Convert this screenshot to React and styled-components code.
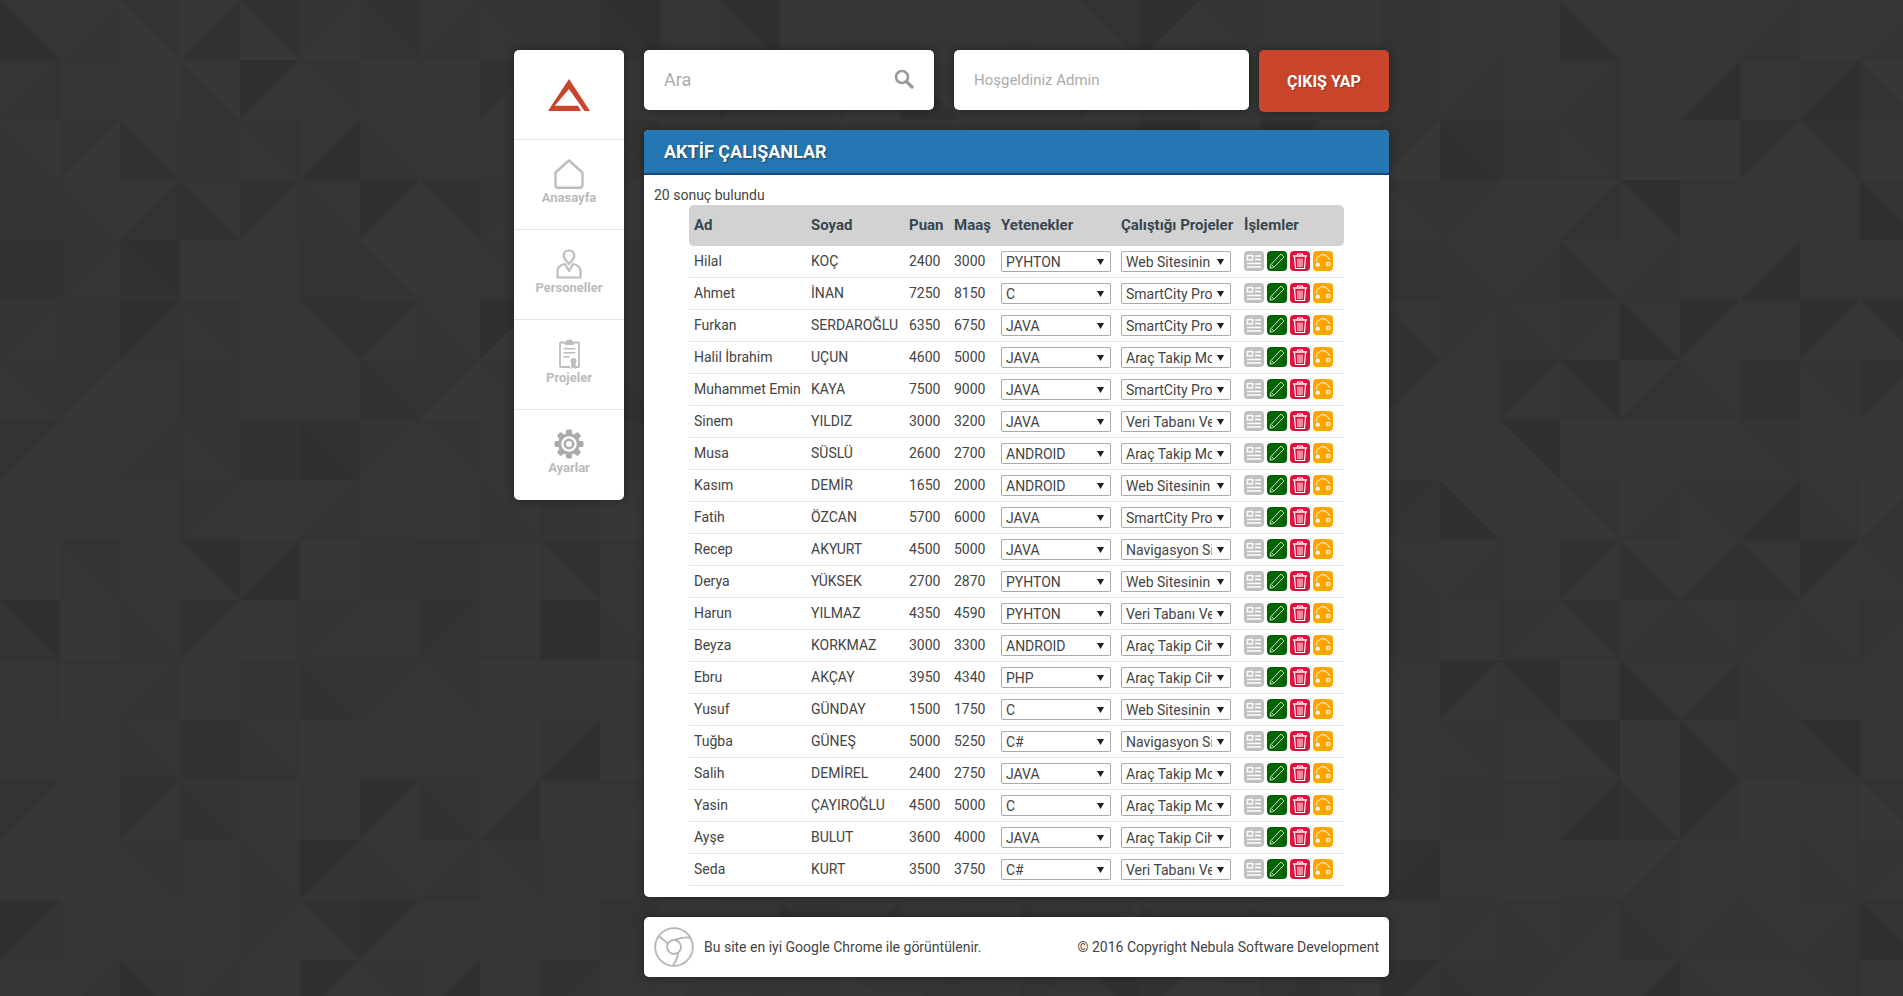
import React from 'react'
import styled, { createGlobalStyle } from 'styled-components'

// triangle tile background, seeded so it stays the same every load
function makeBackground() {
  let seed = 7
  const rnd = () => {
    seed = (seed * 16807) % 2147483647
    return seed / 2147483647
  }
  const shades = ['#353535', '#353535', '#343434', '#363636', '#353535', '#333333', '#373737', '#363636', '#343434', '#323232', '#353535', '#303030']
  const pick = () => shades[Math.floor(rnd() * shades.length)]
  let polys = ''
  for (let y = 0; y < 17; y++) {
    for (let x = 0; x < 32; x++) {
      const l = x * 60, t = y * 60, r = l + 60, b = t + 60
      if ((x + y) % 2 === 0) {
        polys += `<polygon points="${l},${t} ${r},${t} ${r},${b}" fill="${pick()}"/><polygon points="${l},${t} ${l},${b} ${r},${b}" fill="${pick()}"/>`
      } else {
        polys += `<polygon points="${r},${t} ${l},${t} ${l},${b}" fill="${pick()}"/><polygon points="${r},${t} ${r},${b} ${l},${b}" fill="${pick()}"/>`
      }
    }
  }
  const svg = `<svg xmlns="http://www.w3.org/2000/svg" width="1920" height="1020">${polys}</svg>`
  return `data:image/svg+xml,${encodeURIComponent(svg)}`
}

const arrow = `data:image/svg+xml,${encodeURIComponent('<svg xmlns="http://www.w3.org/2000/svg" width="7" height="6"><polygon points="0,0 7,0 3.5,6" fill="#222"/></svg>')}`

const GlobalStyle = createGlobalStyle`
  html, body {
    margin: 0;
    padding: 0;
  }
  body {
    background: #353535 url("${makeBackground()}") 0 0;
    font-family: Roboto, "Liberation Sans", sans-serif;
    font-size: 14px;
    color: #444;
  }
`

const skills = ['PYHTON', 'C', 'JAVA', 'ANDROID', 'PHP', 'C#']
const WEB = 'Web Sitesinin Yapımı'
const SMART = 'SmartCity Projesi'
const MODUL = 'Araç Takip Modülü'
const CIHAZ = 'Araç Takip Cihazı'
const VERI = 'Veri Tabanı Ve Sunucu'
const NAV = 'Navigasyon Sistemi'
const projects = [WEB, SMART, MODUL, CIHAZ, VERI, NAV]

const people = [
  ['Hilal', 'KOÇ', 2400, 3000, 'PYHTON', WEB],
  ['Ahmet', 'İNAN', 7250, 8150, 'C', SMART],
  ['Furkan', 'SERDAROĞLU', 6350, 6750, 'JAVA', SMART],
  ['Halil İbrahim', 'UÇUN', 4600, 5000, 'JAVA', MODUL],
  ['Muhammet Emin', 'KAYA', 7500, 9000, 'JAVA', SMART],
  ['Sinem', 'YILDIZ', 3000, 3200, 'JAVA', VERI],
  ['Musa', 'SÜSLÜ', 2600, 2700, 'ANDROID', MODUL],
  ['Kasım', 'DEMİR', 1650, 2000, 'ANDROID', WEB],
  ['Fatih', 'ÖZCAN', 5700, 6000, 'JAVA', SMART],
  ['Recep', 'AKYURT', 4500, 5000, 'JAVA', NAV],
  ['Derya', 'YÜKSEK', 2700, 2870, 'PYHTON', WEB],
  ['Harun', 'YILMAZ', 4350, 4590, 'PYHTON', VERI],
  ['Beyza', 'KORKMAZ', 3000, 3300, 'ANDROID', CIHAZ],
  ['Ebru', 'AKÇAY', 3950, 4340, 'PHP', CIHAZ],
  ['Yusuf', 'GÜNDAY', 1500, 1750, 'C', WEB],
  ['Tuğba', 'GÜNEŞ', 5000, 5250, 'C#', NAV],
  ['Salih', 'DEMİREL', 2400, 2750, 'JAVA', MODUL],
  ['Yasin', 'ÇAYIROĞLU', 4500, 5000, 'C', MODUL],
  ['Ayşe', 'BULUT', 3600, 4000, 'JAVA', CIHAZ],
  ['Seda', 'KURT', 3500, 3750, 'C#', VERI],
]

function Logo() {
  return (
    <svg width="42" height="32" viewBox="0 0 42 32">
      <polygon fill="#c9442b" points="21,0 42,32 36.500,32 21,10 6.700,26.700 30,26.700 33,32 0,32" />
    </svg>
  )
}

function HomeIcon() {
  return (
    <svg width="30" height="30" viewBox="0 0 30 30" fill="none" stroke="#bdbdbd" strokeWidth="2.4" strokeLinejoin="round">
      <path d="M15 1.500 L28.500 13.500 V26 Q28.500 28.800 25.500 28.800 H4.500 Q1.500 28.800 1.500 26 V13.500 Z" />
    </svg>
  )
}

function PersonIcon() {
  return (
    <svg width="26" height="30" viewBox="0 0 26 30" fill="none" stroke="#bdbdbd" strokeWidth="2.2" strokeLinejoin="round">
      <path d="M13 1.500 C17 1.500 18.600 4.500 18.200 7.500 C17.800 10 15 12.500 13 15 C11 12.500 8.200 10 7.800 7.500 C7.400 4.500 9 1.500 13 1.500 Z" />
      <path d="M9 15 C4 16 1.500 18.500 1.500 22 V28.500 H24.500 V22 C24.500 18.500 22 16 17 15 L13 22 Z" />
    </svg>
  )
}

function ClipboardIcon() {
  return (
    <svg width="21" height="30" viewBox="0 0 21 30">
      <path fill="none" stroke="#bdbdbd" strokeWidth="1.800" d="M6 3.500 H2 Q1 3.500 1 4.500 V27 Q1 28 2 28 H11 M15 28 H19 Q20 28 20 27 V4.500 Q20 3.500 19 3.500 H15" />
      <path fill="#bdbdbd" d="M6 3 Q7 3 7.500 1.500 Q8 0.500 10.500 0.500 Q13 0.500 13.500 1.500 Q14 3 15 3 V6 H6 Z" />
      <path fill="#bdbdbd" d="M4.500 9 H16.500 V10.500 H4.500 Z M4.500 13 H16.500 V14.500 H4.500 Z M4.500 17 H10.500 V18.500 H4.500 Z" />
      <circle cx="14.500" cy="22" r="3" fill="#bdbdbd" />
      <path fill="#bdbdbd" d="M12.500 24 H16.500 L17 30 L14.500 28.500 L12 30 Z" />
    </svg>
  )
}

function GearIcon() {
  const teeth = [0, 45, 90, 135, 180, 225, 270, 315]
  return (
    <svg width="30" height="30" viewBox="0 0 30 30">
      {teeth.map(a => (
        <rect key={a} x="12" y="0.500" width="6" height="6" rx="1.500" fill="#aaa" transform={`rotate(${a} 15 15)`} />
      ))}
      <circle cx="15" cy="15" r="9.300" fill="none" stroke="#aaa" strokeWidth="3" />
      <circle cx="15" cy="15" r="4.200" fill="none" stroke="#aaa" strokeWidth="2.400" />
    </svg>
  )
}

function SearchIcon() {
  return (
    <svg width="20" height="20" viewBox="0 0 20 20" fill="none" stroke="#999" strokeWidth="2.600" strokeLinecap="round">
      <circle cx="8" cy="8" r="6" />
      <path d="M12.500 12.500 L18 18" strokeWidth="3.200" />
    </svg>
  )
}

function ChromeIcon() {
  return (
    <svg width="40" height="40" viewBox="0 0 40 40" fill="none" stroke="#b5b5b5" strokeWidth="1.800">
      <circle cx="20" cy="20" r="18.800" />
      <circle cx="20" cy="20" r="7" />
      <path d="M20 13 C27 11 32 9 37 11" />
      <path d="M14 17 C10 13 6 10 4 9" />
      <path d="M24 26 C24 31 21 35 19 38.500" />
    </svg>
  )
}

function DetailGlyph() {
  return (
    <svg width="20" height="20" viewBox="0 0 20 20" fill="none" stroke="#fff" strokeWidth="1.500">
      <rect x="3.500" y="4.500" width="5" height="4.500" />
      <path d="M11 5 H17 M11 8.500 H17 M3 12.500 H17 M3 16 H17" />
    </svg>
  )
}

function PencilGlyph() {
  return (
    <svg width="20" height="20" viewBox="0 0 20 20" fill="none" stroke="#cfe6cf" strokeWidth="1">
      <path d="M4 13.500 L14 3 L17 6 L6.500 16.500 L3 17 Z" />
      <path d="M4.500 13.500 L6.500 15.500" />
    </svg>
  )
}

function TrashGlyph() {
  return (
    <svg width="20" height="20" viewBox="0 0 20 20" fill="none" stroke="#fff" strokeWidth="1.200">
      <path d="M3 5 H17" strokeWidth="1.500" />
      <path d="M7.500 4.500 V3 H12.500 V4.500" />
      <path d="M4.500 6 L5.500 17.500 H14.500 L15.500 6" />
      <path d="M8 7.500 V16 M10 7.500 V16 M12 7.500 V16" strokeWidth="1" />
    </svg>
  )
}

function LinkGlyph() {
  return (
    <svg width="20" height="20" viewBox="0 0 20 20" fill="none" stroke="#fff" strokeWidth="1">
      <path d="M3 10.300 C4 6 7 3.700 10 3.700 C13 3.700 15.500 5.800 16.300 8.700" />
      <circle cx="4.700" cy="13.700" r="2.100" fill="#fff" stroke="none" />
      <circle cx="15.300" cy="13" r="1.700" strokeWidth="1.200" />
    </svg>
  )
}

const Page = styled.div`
  display: flex;
  gap: 20px;
  width: 875px;
  margin: 0 auto;
  padding: 50px 0 20px;
  align-items: flex-start;
`

const Sidebar = styled.nav`
  flex: 0 0 110px;
  background: #fff;
  border-radius: 5px;
  box-shadow: 0 0 8px rgba(0, 0, 0, 0.35);
`

const NavItem = styled.a`
  display: flex;
  flex-direction: column;
  align-items: center;
  justify-content: ${p => (p.$logo ? 'center' : 'flex-start')};
  height: 90px;
  box-sizing: border-box;
  padding-top: ${p => (p.$logo ? '0' : '19px')};
  border-bottom: 1px solid #e4e4e4;
  font-size: 13px;
  font-weight: 700;
  line-height: 14px;
  color: #bbb;
  &:last-child {
    border-bottom: 0;
  }
`

const NavIcon = styled.span`
  display: flex;
  height: 30px;
  margin-bottom: 2px;
  align-items: center;
`

const Main = styled.main`
  flex: 0 0 745px;
  width: 745px;
  display: flex;
  flex-direction: column;
`

const TopBar = styled.div`
  display: flex;
  align-items: flex-start;
  height: 62px;
  margin-bottom: 18px;
`

const SearchBox = styled.div`
  flex: 0 0 290px;
  height: 60px;
  box-sizing: border-box;
  display: flex;
  align-items: center;
  justify-content: space-between;
  padding: 0 20px 2px;
  margin-right: 20px;
  background: #fff;
  border-radius: 5px;
  font-size: 18px;
  color: #aaa;
  box-shadow: 0 0 8px rgba(0, 0, 0, 0.35);
`

const Welcome = styled.div`
  flex: 0 0 295px;
  height: 60px;
  box-sizing: border-box;
  display: flex;
  align-items: center;
  padding: 0 20px;
  margin-right: 10px;
  background: #fff;
  border-radius: 5px;
  font-size: 15px;
  color: #aaa;
  box-shadow: 0 0 8px rgba(0, 0, 0, 0.35);
`

const LogoutButton = styled.button`
  flex: 0 0 130px;
  height: 62px;
  border: 0;
  border-radius: 5px;
  background: #c9442b;
  color: #fff;
  font-family: inherit;
  font-size: 16px;
  font-weight: 700;
  text-shadow: 1px 1px 1px rgba(0, 0, 0, 0.25);
  box-shadow: 0 0 8px rgba(0, 0, 0, 0.35);
`

const Panel = styled.section`
  background: #fff;
  border-radius: 5px;
  overflow: hidden;
  height: 767px;
  box-shadow: 0 0 8px rgba(0, 0, 0, 0.35);
`

const PanelTitle = styled.h1`
  margin: 0;
  height: 43px;
  line-height: 43px;
  padding-left: 20px;
  background: #2577b3;
  border-bottom: 2px solid #164a7a;
  color: #fff;
  font-size: 18px;
  font-weight: 700;
  text-shadow: 1px 1px 2px rgba(0, 0, 0, 0.45);
`

const ResultCount = styled.p`
  margin: 0;
  padding: 11px 0 0 10px;
  height: 19px;
  line-height: 19px;
`

const Table = styled.table`
  table-layout: fixed;
  width: 655px;
  margin-left: 45px;
  border-collapse: separate;
  border-spacing: 0;
`

const HeadCell = styled.th`
  box-sizing: border-box;
  width: ${p => p.$w}px;
  height: 41px;
  padding: 0 5px 2px;
  background: #d2d2d2;
  text-align: left;
  font-size: 15px;
  font-weight: 700;
  color: #37474f;
  white-space: nowrap;
  &:first-child {
    border-radius: 5px 0 0 5px;
  }
  &:last-child {
    border-radius: 0 5px 5px 0;
  }
`

const Cell = styled.td`
  height: 29px;
  padding: 0 5px 2px;
  border-bottom: 1px solid #e4e4f0;
  font-size: 14px;
  color: #444;
  white-space: nowrap;
  overflow: hidden;
`

const Select = styled.select`
  display: block;
  appearance: none;
  width: 110px;
  height: 21px;
  box-sizing: border-box;
  padding: 0 18px 0 4px;
  margin-top: 2px;
  border: 1px solid #a9a9a9;
  border-radius: 2px;
  background: #fff url("${arrow}") no-repeat right 6px center;
  font-family: inherit;
  font-size: 14px;
  color: #444;
`

const Actions = styled.div`
  display: flex;
  gap: 3px;
  margin-top: 1px;
`

const ActionIcon = styled.span`
  display: block;
  width: 20px;
  height: 20px;
  border-radius: 4px;
  background: ${p => p.$bg};
`

const Footer = styled.footer`
  display: flex;
  align-items: center;
  height: 60px;
  box-sizing: border-box;
  margin-top: 20px;
  padding: 0 10px;
  background: #fff;
  border-radius: 5px;
  font-size: 14px;
  box-shadow: 0 0 8px rgba(0, 0, 0, 0.35);
`

const FooterNote = styled.span`
  margin-left: 10px;
  flex: 1;
`

const nav = [
  ['Anasayfa', <HomeIcon />],
  ['Personeller', <PersonIcon />],
  ['Projeler', <ClipboardIcon />],
  ['Ayarlar', <GearIcon />],
]

const columns = [
  ['Ad', 117], ['Soyad', 98], ['Puan', 45], ['Maaş', 47],
  ['Yetenekler', 120], ['Çalıştığı Projeler', 123], ['İşlemler', 105],
]

export default function App() {
  return (
    <>
      <GlobalStyle />
      <Page>
        <Sidebar>
          <NavItem $logo><Logo /></NavItem>
          {nav.map(([label, icon]) => (
            <NavItem key={label}>
              <NavIcon>{icon}</NavIcon>
              {label}
            </NavItem>
          ))}
        </Sidebar>
        <Main>
          <TopBar>
            <SearchBox>Ara<SearchIcon /></SearchBox>
            <Welcome>Hoşgeldiniz Admin</Welcome>
            <LogoutButton>ÇIKIŞ YAP</LogoutButton>
          </TopBar>
          <Panel>
            <PanelTitle>AKTİF ÇALIŞANLAR</PanelTitle>
            <ResultCount>20 sonuç bulundu</ResultCount>
            <Table>
              <thead>
                <tr>
                  {columns.map(([name, w]) => <HeadCell key={name} $w={w}>{name}</HeadCell>)}
                </tr>
              </thead>
              <tbody>
                {people.map(([ad, soyad, puan, maas, skill, project]) => (
                  <tr key={ad}>
                    <Cell>{ad}</Cell>
                    <Cell>{soyad}</Cell>
                    <Cell>{puan}</Cell>
                    <Cell>{maas}</Cell>
                    <Cell>
                      <Select defaultValue={skill}>
                        {skills.map(s => <option key={s}>{s}</option>)}
                      </Select>
                    </Cell>
                    <Cell>
                      <Select defaultValue={project}>
                        {projects.map(s => <option key={s}>{s}</option>)}
                      </Select>
                    </Cell>
                    <Cell>
                      <Actions>
                        <ActionIcon $bg="#c0c0c0"><DetailGlyph /></ActionIcon>
                        <ActionIcon $bg="#006400"><PencilGlyph /></ActionIcon>
                        <ActionIcon $bg="#dc143c"><TrashGlyph /></ActionIcon>
                        <ActionIcon $bg="#ffa500"><LinkGlyph /></ActionIcon>
                      </Actions>
                    </Cell>
                  </tr>
                ))}
              </tbody>
            </Table>
          </Panel>
          <Footer>
            <ChromeIcon />
            <FooterNote>Bu site en iyi Google Chrome ile görüntülenir.</FooterNote>
            <span>© 2016 Copyright Nebula Software Development</span>
          </Footer>
        </Main>
      </Page>
    </>
  )
}
